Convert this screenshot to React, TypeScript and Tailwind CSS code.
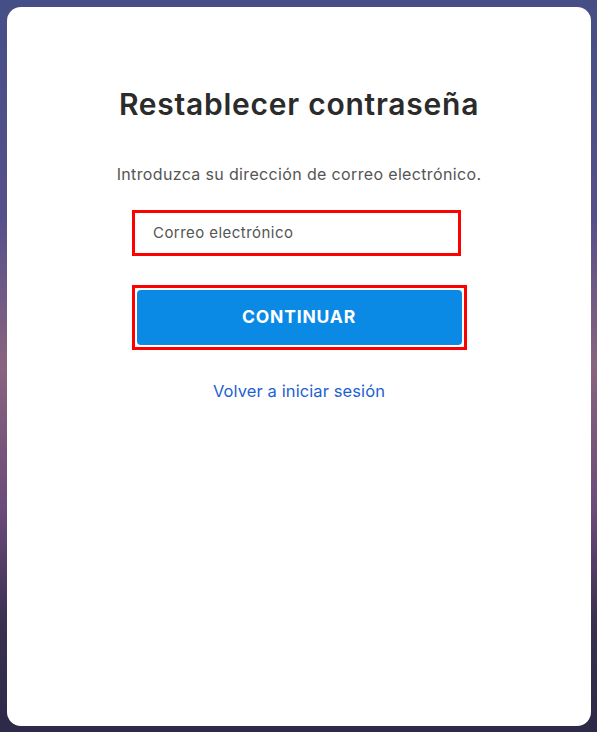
export default function App() {
  return (
    <div className="h-[732px] w-full bg-[linear-gradient(180deg,#454f86_0%,#56508a_30%,#88647f_50%,#6a4a78_70%,#3a3050_85%,#2c2a48_100%)] pb-[6px] pl-[7px] pr-[6px] pt-[7px] font-['Inter',sans-serif]">
      <div className="flex h-full flex-col items-center rounded-[14px] bg-white">
        <h1 className="mt-[77px] text-[30px] font-semibold leading-[40px] tracking-[0.75px] text-[#2b2b2b]">
          Restablecer contraseña
        </h1>
        <p className="mt-[40px] text-[16px] leading-[20px] tracking-[0.35px] text-[#555]">
          Introduzca su dirección de correo electrónico.
        </p>
        <div className="mr-[5px] mt-[26px] flex h-[46px] w-[329px] items-center border-[3px] border-[#ff0000] pl-[18px] text-[15px] leading-[18px] tracking-[0.45px] text-[#555]">
          Correo electrónico
        </div>
        <div className="mt-[29px] border-[3px] border-[#ff0000] p-[2px]">
          <button
            type="button"
            className="flex h-[55px] w-[325px] items-center justify-center rounded-[4px] bg-[#0a8ae4] text-[17.5px] font-bold tracking-[0.8px] text-white"
          >
            CONTINUAR
          </button>
        </div>
        <a href="#" className="mt-[31px] text-[16.5px] leading-[20px] tracking-[0.1px] text-[#1e62d0]">
          Volver a iniciar sesión
        </a>
      </div>
    </div>
  );
}
